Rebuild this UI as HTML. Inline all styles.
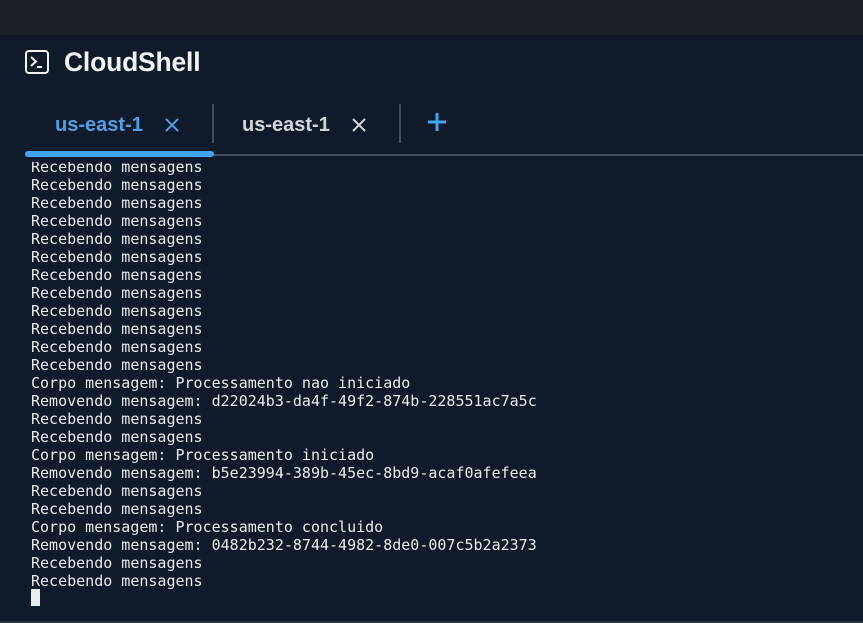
<!DOCTYPE html>
<html><head><meta charset="utf-8"><style>
body{margin:0;width:863px;height:623px;overflow:hidden;background:#0f1b2a;position:relative;font-family:"Liberation Sans",sans-serif}
.top{position:absolute;left:0;top:0;width:863px;height:35px;background:#1b1f27}
.title{position:absolute;left:64px;top:47px;color:#f2f3f3;font-size:26.5px;font-weight:bold;letter-spacing:-0.2px}
.icon{position:absolute;left:25px;top:50px}
.tab{position:absolute;top:114px;font-size:20px;font-weight:bold}
.sep{position:absolute;top:104px;width:2px;height:39px;background:#414d5c}
.line{position:absolute;left:25px;top:154px;width:838px;height:2px;background:#414d5c}
.ul{position:absolute;left:25px;top:151px;width:189px;height:6px;border-radius:3px;background:#42a5f5}
.term{position:absolute;left:31px;top:162px;width:832px;height:455px;overflow:hidden}
pre{margin:0;position:absolute;top:-4px;left:0;font-family:"DejaVu Sans Mono","Liberation Mono",monospace;font-size:15px;line-height:18px;color:#e9ebed}
.cur{position:absolute;left:31px;top:589px;width:9px;height:17px;background:#e9ebed}
.bot{position:absolute;left:0;top:621px;width:863px;height:2px;background:#2a3340}
</style></head><body>
<div class="top"></div>
<svg class="icon" width="24" height="24" viewBox="0 0 24 24"><rect x="1" y="1" width="22" height="22" rx="3" fill="none" stroke="#f2f3f3" stroke-width="2"/><path d="M6 7l5 4.5-5 4.5" fill="none" stroke="#f2f3f3" stroke-width="2"/><path d="M12 17h5" stroke="#f2f3f3" stroke-width="2"/></svg>
<div class="title">CloudShell</div>
<div class="tab" style="left:55px;color:#539fe5">us-east-1</div>
<svg style="position:absolute;left:165px;top:118px" width="14" height="14"><path d="M1 1l12 12M13 1L1 13" stroke="#539fe5" stroke-width="2"/></svg>
<div class="sep" style="left:212px"></div>
<div class="tab" style="left:242px;color:#d1d5db">us-east-1</div>
<svg style="position:absolute;left:352px;top:118px" width="14" height="14"><path d="M1 1l12 12M13 1L1 13" stroke="#d1d5db" stroke-width="2"/></svg>
<div class="sep" style="left:399px"></div>
<svg style="position:absolute;left:427px;top:112px" width="20" height="20"><path d="M10 1v18M1 10h18" stroke="#42a5f5" stroke-width="3"/></svg>
<div class="line"></div><div class="ul"></div>
<div class="term"><pre>Recebendo mensagens
Recebendo mensagens
Recebendo mensagens
Recebendo mensagens
Recebendo mensagens
Recebendo mensagens
Recebendo mensagens
Recebendo mensagens
Recebendo mensagens
Recebendo mensagens
Recebendo mensagens
Recebendo mensagens
Corpo mensagem: Processamento nao iniciado
Removendo mensagem: d22024b3-da4f-49f2-874b-228551ac7a5c
Recebendo mensagens
Recebendo mensagens
Corpo mensagem: Processamento iniciado
Removendo mensagem: b5e23994-389b-45ec-8bd9-acaf0afefeea
Recebendo mensagens
Recebendo mensagens
Corpo mensagem: Processamento concluido
Removendo mensagem: 0482b232-8744-4982-8de0-007c5b2a2373
Recebendo mensagens
Recebendo mensagens</pre></div>
<div class="cur"></div>
<div class="bot"></div>
</body></html>
